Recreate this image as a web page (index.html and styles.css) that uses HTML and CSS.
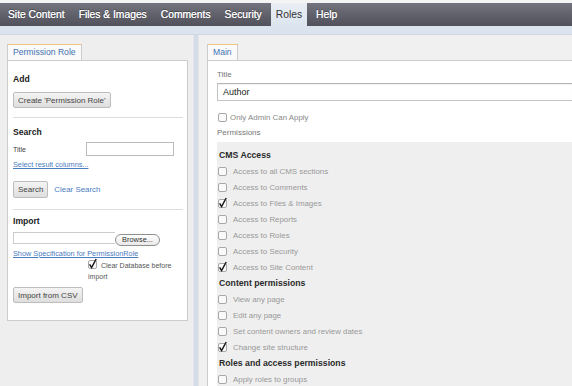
FILE: index.html
```html
<!DOCTYPE html>
<html>
<head>
<meta charset="utf-8">
<link rel="stylesheet" href="styles.css">
</head>
<body>
<div class="topstrip"></div>
<nav class="menu">
  <a class="menu-item">Site Content</a>
  <a class="menu-item">Files &amp; Images</a>
  <a class="menu-item">Comments</a>
  <a class="menu-item">Security</a>
  <a class="menu-item active">Roles</a>
  <a class="menu-item">Help</a>
</nav>
<div class="subbar"></div>
<div class="main">
  <aside class="left">
    <div class="tabs"><span class="tab">Permission Role</span></div>
    <div class="box">
      <h3 class="heading h-add">Add</h3>
      <button class="btn btn-create">Create 'Permission Role'</button>
      <div class="sep sep-1"></div>
      <h3 class="heading h-search">Search</h3>
      <div class="title-row">
        <span class="small-label">Title</span>
        <span class="small-input"></span>
      </div>
      <a class="link link-cols">Select result columns...</a>
      <div class="search-row">
        <button class="btn btn-search">Search</button>
        <a class="plain-link">Clear Search</a>
      </div>
      <div class="sep sep-2"></div>
      <h3 class="heading h-import">Import</h3>
      <div class="file-row">
        <span class="file-box"></span>
        <span class="browse">Browse...</span>
      </div>
      <a class="link link-spec">Show Specification for PermissionRole</a>
      <div class="clear-db">
        <svg class="cb" width="9" height="9" viewBox="0 0 9 9"><rect x="0.5" y="0.5" width="8" height="8" rx="1.5" fill="#fafafa" stroke="#a8a8a8"/><path d="M1.6 4.4 L3.6 7.6 L8.2 -1" fill="none" stroke="#1a1a1a" stroke-width="1.5"/></svg>
        Clear Database before import
      </div>
      <button class="btn btn-csv">Import from CSV</button>
    </div>
  </aside>
  <div class="divider"></div>
  <section class="right">
    <div class="tabs"><span class="tab">Main</span></div>
    <div class="panel">
      <div class="field-label fl-title">Title</div>
      <div class="text-input">Author</div>
      <div class="admin-row">
        <svg class="cb" width="9" height="9" viewBox="0 0 9 9"><rect x="0.5" y="0.5" width="8" height="8" rx="1.5" fill="#fafafa" stroke="#a8a8a8"/></svg>
        <span>Only Admin Can Apply</span>
      </div>
      <div class="field-label fl-perms">Permissions</div>
      <div class="perms">
        <div class="perm-head">CMS Access</div>
        <div class="perm-row"><svg class="cb" width="9" height="9" viewBox="0 0 9 9"><rect x="0.5" y="0.5" width="8" height="8" rx="1.5" fill="#fafafa" stroke="#a8a8a8"/></svg><span>Access to all CMS sections</span></div>
        <div class="perm-row"><svg class="cb" width="9" height="9" viewBox="0 0 9 9"><rect x="0.5" y="0.5" width="8" height="8" rx="1.5" fill="#fafafa" stroke="#a8a8a8"/></svg><span>Access to Comments</span></div>
        <div class="perm-row"><svg class="cb" width="9" height="9" viewBox="0 0 9 9"><rect x="0.5" y="0.5" width="8" height="8" rx="1.5" fill="#fafafa" stroke="#a8a8a8"/><path d="M1.6 4.4 L3.6 7.6 L8.2 -1" fill="none" stroke="#1a1a1a" stroke-width="1.5"/></svg><span>Access to Files &amp; Images</span></div>
        <div class="perm-row"><svg class="cb" width="9" height="9" viewBox="0 0 9 9"><rect x="0.5" y="0.5" width="8" height="8" rx="1.5" fill="#fafafa" stroke="#a8a8a8"/></svg><span>Access to Reports</span></div>
        <div class="perm-row"><svg class="cb" width="9" height="9" viewBox="0 0 9 9"><rect x="0.5" y="0.5" width="8" height="8" rx="1.5" fill="#fafafa" stroke="#a8a8a8"/></svg><span>Access to Roles</span></div>
        <div class="perm-row"><svg class="cb" width="9" height="9" viewBox="0 0 9 9"><rect x="0.5" y="0.5" width="8" height="8" rx="1.5" fill="#fafafa" stroke="#a8a8a8"/></svg><span>Access to Security</span></div>
        <div class="perm-row"><svg class="cb" width="9" height="9" viewBox="0 0 9 9"><rect x="0.5" y="0.5" width="8" height="8" rx="1.5" fill="#fafafa" stroke="#a8a8a8"/><path d="M1.6 4.4 L3.6 7.6 L8.2 -1" fill="none" stroke="#1a1a1a" stroke-width="1.5"/></svg><span>Access to Site Content</span></div>
        <div class="perm-head">Content permissions</div>
        <div class="perm-row"><svg class="cb" width="9" height="9" viewBox="0 0 9 9"><rect x="0.5" y="0.5" width="8" height="8" rx="1.5" fill="#fafafa" stroke="#a8a8a8"/></svg><span>View any page</span></div>
        <div class="perm-row"><svg class="cb" width="9" height="9" viewBox="0 0 9 9"><rect x="0.5" y="0.5" width="8" height="8" rx="1.5" fill="#fafafa" stroke="#a8a8a8"/></svg><span>Edit any page</span></div>
        <div class="perm-row"><svg class="cb" width="9" height="9" viewBox="0 0 9 9"><rect x="0.5" y="0.5" width="8" height="8" rx="1.5" fill="#fafafa" stroke="#a8a8a8"/></svg><span>Set content owners and review dates</span></div>
        <div class="perm-row"><svg class="cb" width="9" height="9" viewBox="0 0 9 9"><rect x="0.5" y="0.5" width="8" height="8" rx="1.5" fill="#fafafa" stroke="#a8a8a8"/><path d="M1.6 4.4 L3.6 7.6 L8.2 -1" fill="none" stroke="#1a1a1a" stroke-width="1.5"/></svg><span>Change site structure</span></div>
        <div class="perm-head">Roles and access permissions</div>
        <div class="perm-row"><svg class="cb" width="9" height="9" viewBox="0 0 9 9"><rect x="0.5" y="0.5" width="8" height="8" rx="1.5" fill="#fafafa" stroke="#a8a8a8"/></svg><span>Apply roles to groups</span></div>
      </div>
    </div>
  </section>
</div>
</body>
</html>
```
FILE: styles.css
```css
html, body {
  margin: 0;
  padding: 0;
  width: 572px;
  height: 386px;
  overflow: hidden;
  background: #ffffff;
  font-family: "Liberation Sans", Arial, sans-serif;
  color: #333;
}

.topstrip {
  height: 3px;
  background: #f4f4f4;
}

.menu {
  display: flex;
  gap: 4px;
  height: 23px;
  padding-left: 3px;
  background: linear-gradient(#74747e, #5e5e68 60%, #52525c);
}

.menu-item {
  display: block;
  padding: 0 5px;
  line-height: 23px;
  font-size: 10.3px;
  color: #ffffff;
  text-shadow: 0 -1px 0 rgba(0, 0, 0, 0.35), 0 0 0.4px #ffffff;
  white-space: nowrap;
}

.menu-item.active {
  background: linear-gradient(#e9eef4, #dce5ef);
  color: #333;
  text-shadow: none;
}

.subbar {
  height: 8px;
  background: #dbe4ee;
  border-bottom: 1px solid #cfd8e2;
}

.main {
  display: flex;
  height: 351px;
  overflow: hidden;
}

.left {
  width: 186px;
  padding: 9px 0 0 7px;
  background: #eeeeee;
}

.divider {
  width: 4px;
  background: #d4dde7;
  border-left: 1px solid #e2e8ee;
  border-right: 1px solid #e6e6e6;
}

.right {
  flex: 1;
  display: flex;
  flex-direction: column;
  padding: 9px 0 0 8px;
  background: #f0f0f0;
  min-width: 0;
  overflow: hidden;
}

.tabs {
  display: flex;
  height: 16px;
  flex: none;
}

.tab {
  display: block;
  height: 15px;
  line-height: 15px;
  padding: 0 5px;
  font-size: 8.6px;
  color: #3f72b3;
  background: #fafafa;
  border: 1px solid #cccccc;
  border-top: 1px solid #f1c47c;
  border-bottom: none;
  position: relative;
  z-index: 1;
  white-space: nowrap;
}

.box {
  width: 170px;
  height: 259px;
  padding: 0 4px 0 5px;
  background: #ffffff;
  border: 1px solid #cccccc;
  display: flex;
  flex-direction: column;
  align-items: flex-start;
}

.heading {
  margin: 0;
  font-size: 8.6px;
  font-weight: bold;
  line-height: 12px;
  color: #222;
}

.h-add { margin-top: 12px; }
.h-search { margin-top: 8px; }
.h-import { margin-top: 5px; }

.btn {
  display: block;
  margin: 0;
  padding: 0 4px;
  font-family: "Liberation Sans", Arial, sans-serif;
  font-size: 8px;
  color: #444;
  background: linear-gradient(#f4f4f4, #dedede);
  border: 1px solid #bdbdbd;
  border-radius: 2px;
  white-space: nowrap;
}

.btn-create { margin-top: 7px; height: 16px; }
.btn-search { height: 17px; }
.btn-csv { margin-top: 5px; height: 16px; }

.sep {
  align-self: stretch;
  height: 1px;
  background: #dddddd;
}

.sep-1 { margin-top: 9px; }
.sep-2 { margin-top: 11px; }

.title-row {
  display: flex;
  align-items: center;
  margin-top: 4px;
}

.small-label {
  width: 73px;
  font-size: 7px;
  color: #444;
}

.small-input {
  display: block;
  width: 86px;
  height: 12px;
  border: 1px solid #bbbbbb;
  background: #fff;
}

.link {
  display: block;
  font-size: 7.3px;
  line-height: 10px;
  color: #4a7cc0;
  text-decoration: underline;
  white-space: nowrap;
}

.link-cols { margin-top: 4px; }
.link-spec { margin-top: 3px; }

.search-row {
  display: flex;
  align-items: center;
  margin-top: 11px;
}

.plain-link {
  margin-left: 6px;
  font-size: 7.9px;
  color: #4a7cc0;
}

.file-row {
  display: flex;
  align-items: flex-start;
  margin-top: 5px;
  height: 14px;
}

.file-box {
  display: block;
  width: 101px;
  height: 10px;
  border: 1px solid #cccccc;
  border-right: none;
  background: #fff;
}

.browse {
  display: block;
  margin-top: 2px;
  width: 43px;
  height: 10px;
  line-height: 10px;
  font-size: 7.4px;
  color: #333;
  text-align: center;
  background: linear-gradient(#ffffff, #e9e9e9);
  border: 1px solid #8f8f8f;
  border-radius: 6px;
}

.clear-db {
  margin-top: 1px;
  margin-left: 75px;
  width: 94px;
  font-size: 7px;
  line-height: 11px;
  color: #555;
}

.clear-db .cb {
  vertical-align: -1px;
  margin-right: 2px;
}

.cb {
  overflow: visible;
  flex: none;
}

.panel {
  flex: 1;
  min-height: 0;
  overflow: hidden;
  background: #ffffff;
  border: 1px solid #cccccc;
  border-right: none;
  border-bottom: none;
  padding-left: 9px;
}

.field-label {
  font-size: 8px;
  line-height: 10px;
  color: #777;
}

.fl-title { margin-top: 9px; }
.fl-perms { margin-top: 5px; }

.text-input {
  margin-top: 3px;
  height: 16px;
  line-height: 16px;
  padding-left: 5px;
  font-size: 9px;
  color: #222;
  border: 1px solid #c4c4c4;
  border-top-color: #b5b5b5;
  border-right: none;
  box-shadow: inset 0 1px 1px rgba(0, 0, 0, 0.06);
}

.admin-row {
  display: flex;
  align-items: center;
  gap: 3px;
  margin-top: 10px;
  margin-left: 1px;
  height: 12px;
  font-size: 7.9px;
  color: #888;
}

.perms {
  margin-top: 4px;
  padding: 5px 0 0 2px;
  background: #efefef;
}

.perm-head {
  height: 16px;
  line-height: 16px;
  font-size: 8.7px;
  font-weight: bold;
  color: #2a2a2a;
  white-space: nowrap;
}

.perm-row {
  display: flex;
  align-items: center;
  gap: 6px;
  height: 16px;
  font-size: 7.9px;
  color: #999;
  white-space: nowrap;
}

.perm-row .cb {
  margin-left: -1px;
}
```
